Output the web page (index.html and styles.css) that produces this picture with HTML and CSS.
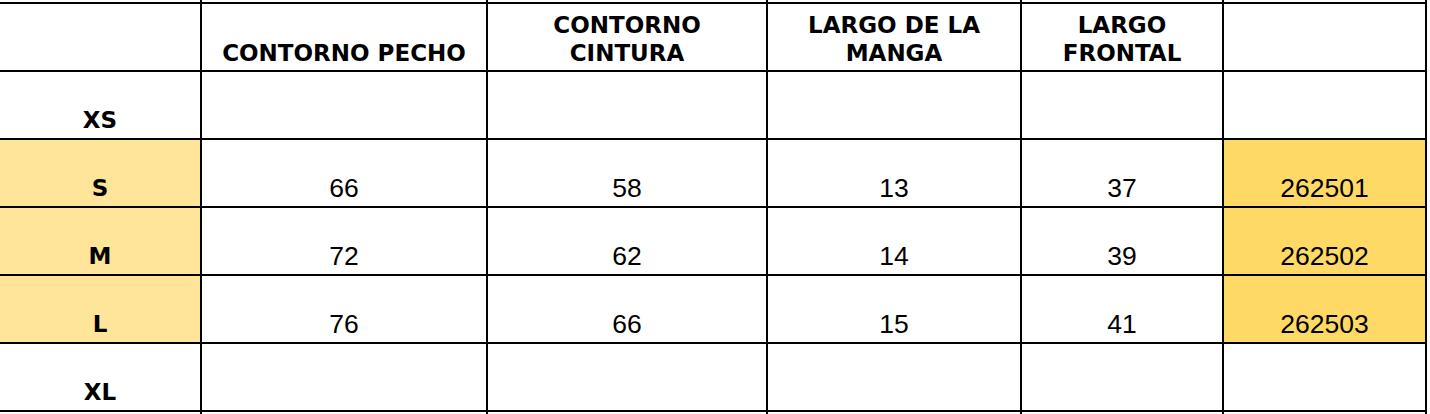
FILE: index.html
```html
<!DOCTYPE html>
<html lang="es">
<head>
<meta charset="utf-8">
<title>Tabla de tallas</title>
<link rel="stylesheet" href="styles.css">
</head>
<body>
<table class="sizes">
  <colgroup>
    <col class="c0"><col class="c1"><col class="c2"><col class="c3"><col class="c4"><col class="c5">
  </colgroup>
  <tbody>
    <tr class="cut-top"><td></td><td></td><td></td><td></td><td></td><td></td></tr>
    <tr class="head">
      <td></td>
      <td>CONTORNO PECHO</td>
      <td>CONTORNO<br>CINTURA</td>
      <td>LARGO DE LA<br>MANGA</td>
      <td>LARGO<br>FRONTAL</td>
      <td></td>
    </tr>
    <tr>
      <td class="size">XS</td><td></td><td></td><td></td><td></td><td></td>
    </tr>
    <tr>
      <td class="size light">S</td><td>66</td><td>58</td><td>13</td><td>37</td><td class="gold">262501</td>
    </tr>
    <tr>
      <td class="size light">M</td><td>72</td><td>62</td><td>14</td><td>39</td><td class="gold">262502</td>
    </tr>
    <tr>
      <td class="size light">L</td><td>76</td><td>66</td><td>15</td><td>41</td><td class="gold">262503</td>
    </tr>
    <tr>
      <td class="size">XL</td><td></td><td></td><td></td><td></td><td></td>
    </tr>
    <tr class="cut-bottom"><td></td><td></td><td></td><td></td><td></td><td></td></tr>
  </tbody>
</table>
</body>
</html>
```
FILE: styles.css
```css
html, body {
  margin: 0;
  padding: 0;
  background: #ffffff;
}

.sizes {
  border-collapse: collapse;
  table-layout: fixed;
  width: 1429px;
  margin-left: -2px;
  font-family: "Liberation Sans", Arial, sans-serif;
  font-size: 26.5px;
  color: #000;
}

.c0 { width: 202px; }
.c1 { width: 286px; }
.c2 { width: 280px; }
.c3 { width: 254px; }
.c4 { width: 202px; }
.c5 { width: 203px; }

.sizes td {
  border: 2px solid #000;
  height: 68px;
  padding: 0 4px 4px;
  box-sizing: border-box;
  text-align: center;
  vertical-align: bottom;
  line-height: 28px;
  white-space: nowrap;
}

.sizes .cut-top td {
  border-top: none;
  height: 3px;
  padding: 0;
}

.sizes .cut-bottom td {
  border-bottom: none;
  height: 20px;
  padding: 0;
}

.head td,
.sizes td.size {
  font-family: "DejaVu Sans", "Liberation Sans", sans-serif;
  font-weight: bold;
  font-size: 23px;
}

.sizes .head td {
  padding-bottom: 3px;
}

.sizes td.light { background: #ffe599; }
.sizes td.gold { background: #ffd966; }
```
